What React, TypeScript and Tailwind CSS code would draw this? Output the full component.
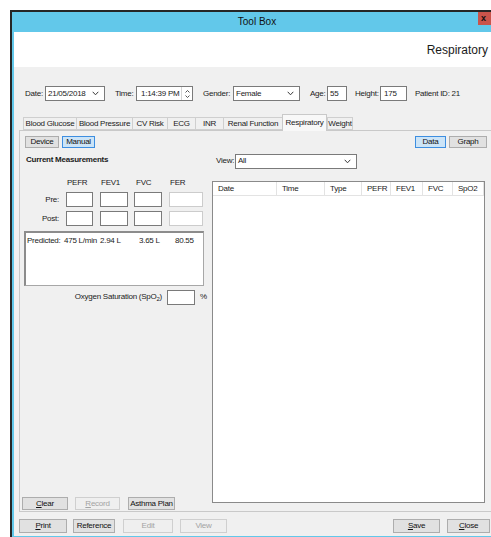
import type { ReactNode } from "react";

const text = "text-[8px] leading-none tracking-[-0.25px] whitespace-nowrap text-[#1b1b1b]";

function Chevron() {
  return (
    <svg width="7" height="5" viewBox="0 0 7 5" className="shrink-0">
      <path d="M0.7 0.8 L3.5 3.8 L6.3 0.8" fill="none" stroke="#3a3a3a" strokeWidth="1" />
    </svg>
  );
}

function Select({ value, className }: { value: string; className: string }) {
  return (
    <div
      className={`flex h-[15px] items-center justify-between border border-[#7a7a7a] bg-white pl-[2px] pr-[5px] ${className}`}
    >
      <span>{value}</span>
      <Chevron />
    </div>
  );
}

function Field({
  value,
  className,
  disabled,
  children,
}: {
  value?: string;
  className: string;
  disabled?: boolean;
  children?: ReactNode;
}) {
  return (
    <div
      className={`flex h-[15px] items-center bg-white pl-[2px] ${
        disabled ? "border border-[#cccccc]" : "border border-[#7a7a7a]"
      } ${className}`}
    >
      {value}
      {children}
    </div>
  );
}

function Button({
  children,
  className,
  active,
  disabled,
}: {
  children: ReactNode;
  className: string;
  active?: boolean;
  disabled?: boolean;
}) {
  let look = "border-[#adadad] bg-[#e1e1e1] text-[#111]";
  if (active) look = "border-[#3d8ee0] bg-[#cce4f7] text-[#111]";
  if (disabled) look = "border-[#cfcfcf] bg-[#efefef] text-[#a3a3a3]";
  return (
    <div className={`flex shrink-0 items-center justify-center border ${look} ${className}`}>
      {children}
    </div>
  );
}

const tabs = [
  { name: "Blood Glucose", w: "w-[53px]" },
  { name: "Blood Pressure", w: "w-[56px]" },
  { name: "CV Risk", w: "w-[35px]" },
  { name: "ECG", w: "w-[28px]" },
  { name: "INR", w: "w-[28px]" },
  { name: "Renal Function", w: "w-[59px]" },
  { name: "Respiratory", w: "w-[45px]", selected: true },
  { name: "Weight", w: "w-[26px]" },
];

const columns = [
  { name: "Date", w: "w-[64px]" },
  { name: "Time", w: "w-[48px]" },
  { name: "Type", w: "w-[37px]" },
  { name: "PEFR", w: "w-[29px]" },
  { name: "FEV1", w: "w-[32px]" },
  { name: "FVC", w: "w-[30px]" },
  { name: "SpO2", w: "w-[31px]" },
];

function MeasureRow({ label }: { label: string }) {
  return (
    <div className="flex h-[15px] items-center">
      <span className="w-[42px] pr-[3px] text-right">{label}</span>
      <Field className="ml-[4px] w-[27px]" />
      <Field className="ml-[7px] w-[28px]" />
      <Field className="ml-[6px] w-[28px]" />
      <Field className="ml-[7px] w-[34px]" disabled />
    </div>
  );
}

export default function App() {
  return (
    <div
      className={`h-[537px] w-[491px] overflow-hidden bg-white pl-[10px] pt-[10px] font-['Liberation_Sans',Arial,sans-serif] ${text}`}
    >
      <div className="flex h-[527px] flex-col border-l-2 border-t-2 border-[#262626] bg-[#62c8ea] pb-[1px] pl-[2px]">
        {/* title bar */}
        <div className="flex h-[20px] shrink-0">
          <div className="flex flex-1 items-center justify-center pl-[22px] text-[10px] tracking-normal text-[#111]">
            Tool Box
          </div>
          <div className="flex h-[13px] w-[13px] items-center bg-[#c9544b] pl-[3px] text-[9px] font-bold text-[#111]">
            x
          </div>
        </div>

        {/* header */}
        <div className="flex h-[35px] shrink-0 items-center justify-end bg-white pr-[3px] text-[12px] tracking-normal text-[#1b1b1b]">
          Respiratory
        </div>

        {/* body */}
        <div className="flex flex-1 flex-col bg-[#f0f0f0] pt-[19px]">
          {/* patient details */}
          <div className="flex h-[15px] items-center pl-[11px]">
            <span className="w-[20px]">Date:</span>
            <Select value="21/05/2018" className="w-[60px]" />
            <span className="ml-[10px] w-[21px]">Time:</span>
            <Field className="w-[57px] justify-between pl-[4px]">
              <span>1:14:39 PM</span>
              <div className="flex h-full w-[11px] flex-col items-center justify-center gap-[2px] border-l border-[#d4d4d4]">
                <svg width="5" height="3" viewBox="0 0 5 3">
                  <path d="M0.5 2.5 L2.5 0.5 L4.5 2.5" fill="none" stroke="#444" strokeWidth="0.9" />
                </svg>
                <svg width="5" height="3" viewBox="0 0 5 3">
                  <path d="M0.5 0.5 L2.5 2.5 L4.5 0.5" fill="none" stroke="#444" strokeWidth="0.9" />
                </svg>
              </div>
            </Field>
            <span className="ml-[10px] w-[30px]">Gender:</span>
            <Select value="Female" className="w-[67px]" />
            <span className="ml-[10px] w-[17px]">Age:</span>
            <Field value="55" className="w-[20px]" />
            <span className="ml-[8px] w-[25px]">Height:</span>
            <Field value="175" className="w-[27px] pl-[3px]" />
            <span className="ml-[8px]">Patient ID: 21</span>
          </div>

          {/* tab strip */}
          <div className="mt-[13px] flex h-[16px] items-end pl-[9px]">
            {tabs.map((t) =>
              t.selected ? (
                <div
                  key={t.name}
                  className={`relative -mb-[1px] flex h-[17px] items-center justify-center border border-b-0 border-[#c9c9c9] bg-[#f8f8f8] ${t.w}`}
                >
                  {t.name}
                </div>
              ) : (
                <div
                  key={t.name}
                  className={`flex h-[13px] items-center justify-center border border-r-0 border-[#cfcfcf] bg-[#f0f0f0] last:border-r ${t.w}`}
                >
                  {t.name}
                </div>
              )
            )}
          </div>

          {/* tab page */}
          <div className="ml-[5px] flex h-[382px] border-b border-l border-t border-[#c9c9c9]">
            {/* left side: entry */}
            <div className="flex w-[190px] shrink-0 flex-col">
              <div className="mt-[5px] flex gap-[3px] pl-[5px]">
                <Button className="h-[12px] w-[34px]">Device</Button>
                <Button className="h-[12px] w-[33px]" active>
                  Manual
                </Button>
              </div>
              <div className="mt-[7px] flex h-[10px] items-center pl-[6px] font-bold">Current Measurements</div>

              <div className="mt-[13px] flex h-[10px] items-center">
                <span className="ml-[47px] w-[34px]">PEFR</span>
                <span className="w-[35px]">FEV1</span>
                <span className="w-[34px]">FVC</span>
                <span>FER</span>
              </div>
              <div className="mt-[4px]">
                <MeasureRow label="Pre:" />
              </div>
              <div className="mt-[4px]">
                <MeasureRow label="Post:" />
              </div>

              <div className="ml-[4px] mt-[5px] h-[55px] w-[180px] border border-l-2 border-t-2 border-[#a7a7a7] border-l-[#8c8c8c] border-t-[#8c8c8c] bg-white">
                <div className="mt-[4px] flex">
                  <span className="ml-[1px] w-[37px]">Predicted:</span>
                  <span className="w-[36px]">475 L/min</span>
                  <span className="w-[39px]">2.94 L</span>
                  <span className="w-[36px]">3.65 L</span>
                  <span>80.55</span>
                </div>
              </div>

              <div className="mt-[4px] flex h-[14px] items-center">
                <span className="w-[143px] pr-[1px] text-right">
                  Oxygen Saturation (SpO<sub className="text-[6px]">2</sub>)
                </span>
                <Field className="ml-[4px] h-[14px] w-[28px]" />
                <span className="ml-[5px]">%</span>
              </div>

              <div className="flex-1" />
              <div className="mb-[1px] flex pl-[2px]">
                <Button className="h-[13px] w-[46px]">
                  <span className="underline">C</span>lear
                </Button>
                <Button className="ml-[7px] h-[13px] w-[45px]" disabled>
                  <span className="underline">R</span>ecord
                </Button>
                <Button className="ml-[8px] h-[13px] w-[47px]">Asthma Plan</Button>
              </div>
            </div>

            {/* right side: history */}
            <div className="flex flex-1 flex-col">
              <div className="mt-[5px] flex justify-end gap-[3px] pr-[4px]">
                <Button className="h-[12px] w-[31px]" active>
                  Data
                </Button>
                <Button className="h-[12px] w-[38px]">Graph</Button>
              </div>
              <div className="mt-[6px] flex h-[14px] items-center pl-[6px]">
                <span className="w-[19px]">View:</span>
                <Select value="All" className="h-[14px] w-[122px]" />
              </div>
              <div className="mb-[8px] ml-[2px] mr-[6px] mt-[13px] flex-1 border border-[#8a8a8a] bg-white">
                <div className="flex h-[14px] border-b border-[#e3e3e3]">
                  {columns.map((c) => (
                    <div
                      key={c.name}
                      className={`flex items-center border-r border-[#e3e3e3] pl-[5px] ${c.w}`}
                    >
                      {c.name}
                    </div>
                  ))}
                </div>
              </div>
            </div>
          </div>

          {/* footer buttons */}
          <div className="mt-[7px] flex pl-[5px] pr-[1px]">
            <Button className="h-[14px] w-[48px]">
              <span className="underline">P</span>rint
            </Button>
            <Button className="ml-[6px] h-[14px] w-[42px]">Reference</Button>
            <Button className="ml-[8px] h-[14px] w-[50px]" disabled>
              Edit
            </Button>
            <Button className="ml-[7px] h-[14px] w-[47px]" disabled>
              View
            </Button>
            <div className="flex-1" />
            <Button className="h-[14px] w-[47px]">
              <span className="underline">S</span>ave
            </Button>
            <Button className="ml-[7px] h-[14px] w-[43px]">
              <span className="underline">C</span>lose
            </Button>
          </div>
        </div>
      </div>
    </div>
  );
}
